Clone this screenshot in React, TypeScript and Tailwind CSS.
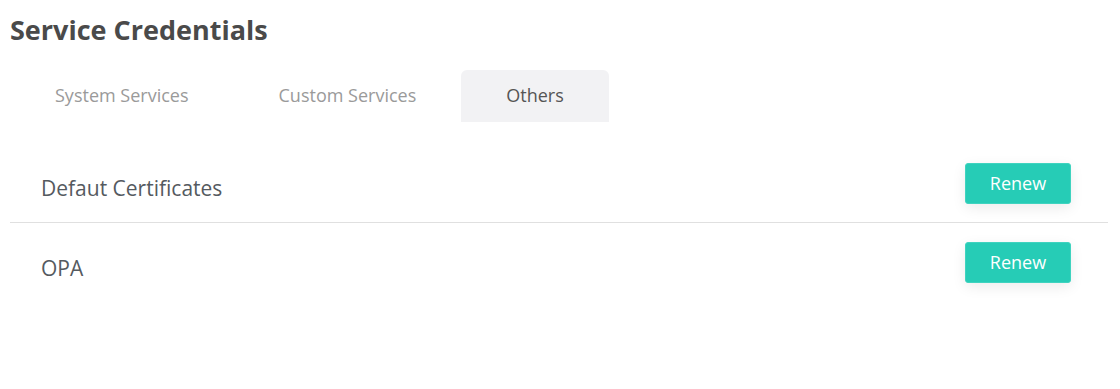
import React from "react";

export default function App() {
  const tabs = ["System Services", "Custom Services", "Others"];
  const rows = ["Defaut Certificates", "OPA"];
  return (
    <div
      className="w-[1120px] h-[389px] bg-white"
      style={{ fontFamily: '"Open Sans", sans-serif' }}
    >
      <div className="pl-[10px] pt-[13px] w-[1108px]">
        <h1 className="text-[27px] leading-[34px] font-bold text-[#4a4a4a]">
          Service Credentials
        </h1>
        <div className="flex mt-[23px]">
          {tabs.map((t) => (
            <div
              key={t}
              className={
                t === "Others"
                  ? "h-[52px] px-[45px] pb-[2px] flex items-center rounded-t-[6px] bg-[#f2f2f4] text-[18px] text-[#555555]"
                  : "h-[52px] px-[45px] pb-[2px] flex items-center text-[18px] text-[#9a9a9a]"
              }
            >
              {t}
            </div>
          ))}
        </div>
        <div className="mt-[22px]">
          {rows.map((r, i) => (
            <div
              key={r}
              className={
                i === 0
                  ? "h-[79px] flex items-center justify-between pl-[31px] pr-[37px] border-b border-[#e0e0e0]"
                  : "h-[79px] flex items-center justify-between pl-[31px] pr-[37px]"
              }
            >
              <span className="text-[21px] text-[#555a5f] pt-[12px]">{r}</span>
              <button
                className={
                  i === 0
                    ? "w-[106px] h-[41px] mt-[1px] rounded-[3px] bg-[#26ccb6] border border-[#3fd3bf] text-white text-[18px] shadow-[0_4px_14px_rgba(0,0,0,0.08)]"
                    : "w-[106px] h-[41px] rounded-[3px] bg-[#26ccb6] border border-[#3fd3bf] text-white text-[18px] shadow-[0_4px_14px_rgba(0,0,0,0.08)]"
                }
              >
                Renew
              </button>
            </div>
          ))}
        </div>
      </div>
    </div>
  );
}
